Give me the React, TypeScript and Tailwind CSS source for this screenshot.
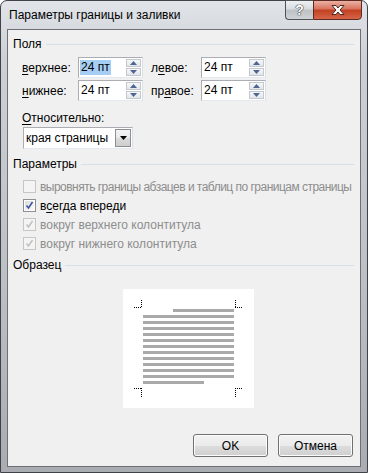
import React from 'react';

const FONT = "font-['Liberation_Sans','Arial',sans-serif]";

function Key({ children }: { children: React.ReactNode }) {
  return <span className="underline underline-offset-[2px]">{children}</span>;
}

function SpinArrow({ up }: { up?: boolean }) {
  return (
    <div className="flex flex-1 items-center justify-center border border-[#c3c8cf] bg-gradient-to-b from-[#f6f7f9] to-[#e3e6ea]">
      <svg width="7" height="4" viewBox="0 0 7 4">
        {up ? (
          <polygon points="0,4 3.5,0 7,4" fill="#4e6491" />
        ) : (
          <polygon points="0,0 3.5,4 7,0" fill="#4e6491" />
        )}
      </svg>
    </div>
  );
}

function SpinField({ value, selected }: { value: string; selected?: boolean }) {
  return (
    <div className="flex h-[21px] w-[65px] border border-[#abadb3] border-b-[#e3e9ef] border-r-[#dbdfe6] bg-white">
      <div className="flex flex-1 items-center pl-[1px]">
        <span className={selected ? 'bg-[#a6cdf3] px-[1px] leading-[15px]' : 'px-[1px] leading-[15px]'}>
          {value}
        </span>
      </div>
      <div className="flex w-[16px] flex-col gap-[1px] py-[1px] pr-[1px]">
        <SpinArrow up />
        <SpinArrow />
      </div>
    </div>
  );
}

function GroupHeader({ label, className }: { label: string; className?: string }) {
  return (
    <div className={'flex h-[15px] items-center pl-[5px] pr-[6px] ' + (className ?? '')}>
      <span className="leading-[15px]">{label}</span>
      <div className="ml-[4px] h-px flex-1 bg-[#d5dfe5]" />
    </div>
  );
}

function CheckRow({
  label,
  checked,
  disabled,
  tight,
}: {
  label: React.ReactNode;
  checked?: boolean;
  disabled?: boolean;
  tight?: boolean;
}) {
  return (
    <div className="flex h-[19px] items-center gap-[4px] whitespace-nowrap pl-[15px]">
      <div
        className={
          'flex h-[13px] w-[13px] shrink-0 items-center justify-center border p-[1px] ' +
          (disabled ? 'border-[#c6c6c6] bg-[#f4f4f4]' : 'border-[#8e8f8f] bg-white')
        }
      >
        <div
          className={
            'flex h-full w-full items-center justify-center ' +
            (disabled ? 'bg-[#f4f4f4]' : 'bg-gradient-to-br from-[#dcdcdc] to-[#fbfbfb]')
          }
        >
          {checked && (
            <svg width="9" height="9" viewBox="0 0 9 9">
              <path
                d="M1.5 4.5 L3.5 7 L7.5 1"
                fill="none"
                stroke={disabled ? '#c2c2c2' : '#3f56a0'}
                strokeWidth="1.6"
              />
            </svg>
          )}
        </div>
      </div>
      <span
        className={
          (disabled ? 'text-[#8d8d8d]' : 'text-black') + (tight ? ' tracking-[-0.52px]' : '')
        }
      >
        {label}
      </span>
    </div>
  );
}

function Preview() {
  const full = Array.from({ length: 11 }, (_, i) => 26 + i * 6);
  return (
    <div className="ml-[115px] mt-[16px] h-[119px] w-[131px] bg-white">
      <svg width="131" height="119" viewBox="0 0 131 119">
        <rect x="50" y="20" width="61" height="3" fill="#a9a9a9" />
        {full.map((y) => (
          <rect key={y} x="20" y={y} width="91" height="3" fill="#a9a9a9" />
        ))}
        <rect x="20" y="92" width="61" height="3" fill="#a9a9a9" />
        <g stroke="#000" strokeWidth="1" strokeDasharray="1 1" fill="none">
          <path d="M11 18.5 H19 M18.5 11 V19" />
          <path d="M112 18.5 H120 M112.5 11 V19" />
          <path d="M11 99.5 H19 M18.5 99 V108" />
          <path d="M112 99.5 H120 M112.5 99 V108" />
        </g>
      </svg>
    </div>
  );
}

function DlgButton({ children }: { children: React.ReactNode }) {
  return (
    <div className="flex h-[23px] w-[75px] items-center justify-center rounded-[3px] border border-[#707070] bg-[linear-gradient(to_bottom,#f2f2f2_0%,#ebebeb_50%,#dddddd_51%,#cfcfcf_100%)] shadow-[inset_0_0_0_1px_#fcfcfc]">
      {children}
    </div>
  );
}

export default function App() {
  return (
    <div className={'h-[473px] w-[368px] bg-white text-[12px] text-black ' + FONT}>
      <div className="relative flex h-full w-full flex-col rounded-t-[7px] border border-[#3f4246] bg-[linear-gradient(to_bottom,#e1e4e8_0%,#cdd1d5_12%,#bcc0c4_60%,#a9adb1_100%)] px-[6px] pb-[5px]">
        {/* title bar */}
        <div className="flex h-[28px] items-center pl-[2px] text-[12px] text-black">
          <span className="leading-[15px]">Параметры границы и заливки</span>
        </div>
        <div className="absolute right-[5px] top-[-1px] flex h-[20px]">
          <div className="flex w-[28px] items-center justify-center rounded-bl-[4px] border border-[#4d5359] border-r-0 bg-[linear-gradient(to_bottom,#eef0f2_0%,#d9dcdf_45%,#bdc1c5_50%,#cfd3d6_100%)]">
            <span className="text-[14px] font-bold leading-[14px] text-white [text-shadow:0_0_1px_#2c3138,0_0_1px_#2c3138,0_0_1px_#2c3138]">
              ?
            </span>
          </div>
          <div className="flex w-[49px] items-center justify-center rounded-br-[4px] border border-[#5c2a22] bg-[linear-gradient(to_bottom,#eab1a3_0%,#d9715c_45%,#c2401f_50%,#d5654a_100%)]">
            <svg width="16" height="12" viewBox="0 0 16 12">
              <path
                d="M2 1.5 H6 L8 4 L10 1.5 H14 L10 6 L14 10.5 H10 L8 8 L6 10.5 H2 L6 6 Z"
                fill="#fff"
                stroke="#4a2a24"
                strokeWidth="1"
                strokeLinejoin="round"
              />
            </svg>
          </div>
        </div>

        {/* client */}
        <div className="flex flex-1 flex-col border border-[#6c6f73] bg-[#f0f0f0]">
          <GroupHeader label="Поля" className="mt-[7px]" />

          <div className="mt-[5px] flex flex-col gap-[2px] whitespace-nowrap pl-[14px]">
            <div className="flex items-center">
              <span className="w-[56px]">
                <Key>в</Key>ерхнее:
              </span>
              <SpinField value="24 пт" selected />
              <span className="ml-[8px] w-[50px]">
                л<Key>е</Key>вое:
              </span>
              <SpinField value="24 пт" />
            </div>
            <div className="flex items-center">
              <span className="w-[56px]">
                <Key>н</Key>ижнее:
              </span>
              <SpinField value="24 пт" />
              <span className="ml-[8px] w-[50px]">
                пр<Key>а</Key>вое:
              </span>
              <SpinField value="24 пт" />
            </div>
          </div>

          <div className="mt-[10px] h-[15px] pl-[14px] leading-[15px]">
            <Key>О</Key>тносительно:
          </div>
          <div className="ml-[15px] mt-[1px] flex h-[22px] w-[110px] border border-[#abadb3] border-b-[#e3e9ef] border-r-[#dbdfe6] bg-white">
            <div className="flex flex-1 items-center whitespace-nowrap pl-[2px]">края страницы</div>
            <div className="m-[1px] flex w-[16px] items-center justify-center border border-[#8b8e92] bg-[linear-gradient(to_bottom,#f3f3f3_0%,#e9e9e9_50%,#dadada_51%,#cdcdcd_100%)]">
              <svg width="7" height="4" viewBox="0 0 7 4">
                <polygon points="0,0 3.5,4 7,0" fill="#000" />
              </svg>
            </div>
          </div>

          <GroupHeader label="Параметры" className="mt-[8px]" />
          <div className="mt-[5px] flex flex-col">
            <CheckRow
              disabled
              tight
              label="выровнять границы абзацев и таблиц по границам страницы"
            />
            <CheckRow
              checked
              label={
                <>
                  в<Key>с</Key>егда впереди
                </>
              }
            />
            <CheckRow checked disabled label="вокруг верхнего колонтитула" />
            <CheckRow checked disabled label="вокруг нижнего колонтитула" />
          </div>

          <GroupHeader label="Образец" className="mt-[5px]" />
          <Preview />

          <div className="mt-auto flex justify-end gap-[10px] pb-[9px] pr-[7px]">
            <DlgButton>OK</DlgButton>
            <DlgButton>Отмена</DlgButton>
          </div>
        </div>
      </div>
    </div>
  );
}
